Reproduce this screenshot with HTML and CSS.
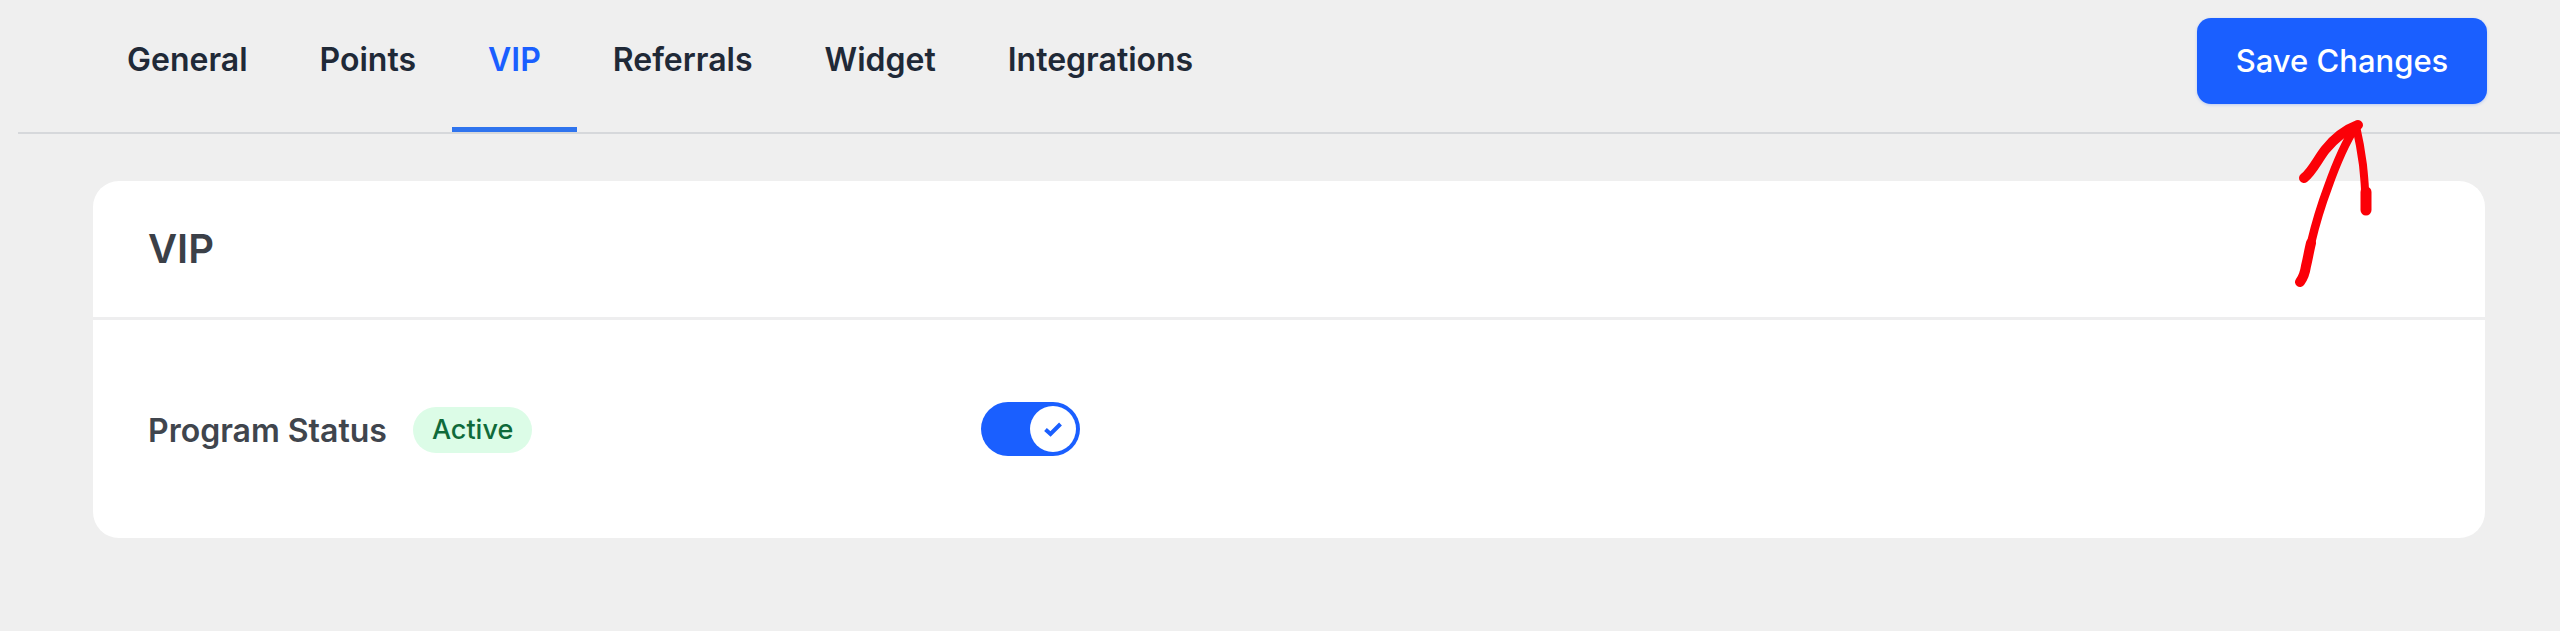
FILE: index.html
```html
<!DOCTYPE html>
<html lang="en">
<head>
    <meta charset="UTF-8">
    <meta name="viewport" content="width=device-width, initial-scale=1.0">
    <title>VIP Settings</title>
    <link rel="stylesheet" href="styles.css">
</head>
<body>
    <!-- Top tabs -->
    <div class="topbar">
        <nav class="tabs">
            <a class="tab" href="#">General</a>
            <a class="tab" href="#">Points</a>
            <a class="tab active" href="#">VIP</a>
            <a class="tab" href="#">Referrals</a>
            <a class="tab" href="#">Widget</a>
            <a class="tab" href="#">Integrations</a>
        </nav>
        <button class="save-button">Save Changes</button>
    </div>

    <!-- VIP card -->
    <div class="card">
        <h2 class="card-title">VIP</h2>
        <div class="card-body">
            <div class="status">
                <span class="status-label">Program Status</span>
                <span class="badge">Active</span>
            </div>
            <div class="toggle">
                <span class="knob">
                    <svg width="20" height="16" viewBox="0 0 20 16">
                        <path d="M2.5 8.5 L7.5 13 L17.5 3" fill="none" stroke="#1a5fff" stroke-width="4"/>
                    </svg>
                </span>
            </div>
        </div>
    </div>

    <!-- Hand drawn arrow over the page -->
    <svg class="arrow" width="100" height="200" viewBox="2280 110 100 200">
        <g fill="none" stroke="#fb0007" stroke-linecap="round" stroke-linejoin="round">
            <path stroke-width="10" d="M2300 282 C2303 278 2305 273 2306 266 C2308 258 2309 251 2311 243"/>
            <path stroke-width="8.5" d="M2311 243 C2316 222 2322 203 2328 187 C2334 170 2343 146 2356 126"/>
            <path stroke-width="10" d="M2304 178 C2312 172 2318 159 2325 150 C2333 140 2342 131 2358 125"/>
            <path stroke-width="8" d="M2356 126 C2359 139 2361 150 2363 165 C2364 176 2365 184 2365 192"/>
            <path stroke-width="11" d="M2366 192 L2366 210"/>
        </g>
    </svg>
</body>
</html>
```

FILE: styles.css
```css
body {
    margin: 0;
    min-height: 631px;
    background: #efefef;
    font-family: Inter, "Liberation Sans", sans-serif;
    position: relative;
    overflow: hidden;
}
.topbar {
    display: flex;
    justify-content: space-between;
    align-items: flex-start;
    height: 132px;
    margin-left: 18px;
    border-bottom: 2px solid #d6d8db;
}
.tabs {
    display: flex;
    padding-left: 73px;
}
.tab {
    height: 127px;
    padding: 0 36px;
    line-height: 119px;
    font-size: 32px;
    font-weight: 600;
    color: #1f2937;
    text-decoration: none;
    border-bottom: 5px solid transparent;
}
.tab.active {
    color: #1a5fff;
    border-bottom-color: #2f74ee;
}
.save-button {
    width: 290px;
    height: 86px;
    margin: 18px 73px 0 0;
    padding: 0 0 2px;
    background: #1a5fff;
    color: #fff;
    border: none;
    border-radius: 14px;
    font-family: inherit;
    font-size: 31px;
    font-weight: 500;
    box-shadow: 0 1px 3px rgba(26, 95, 255, 0.25);
}
.card {
    margin: 47px 75px 0 93px;
    background: #fff;
    border-radius: 26px;
}
.card-title {
    margin: 0;
    padding: 0 55px;
    height: 136px;
    line-height: 136px;
    font-size: 40px;
    font-weight: 600;
    color: #3b4048;
    border-bottom: 3px solid #eeeeef;
}
.card-body {
    display: flex;
    align-items: center;
    height: 218px;
    padding: 0 55px;
}
.status {
    display: flex;
    align-items: center;
    gap: 26px;
    width: 833px;
    padding-top: 2px;
}
.status-label {
    font-size: 32px;
    font-weight: 600;
    color: #40454d;
}
.badge {
    padding: 0 19px;
    height: 46px;
    line-height: 46px;
    border-radius: 23px;
    background: #dcfce7;
    color: #0f6a3a;
    font-size: 27px;
    font-weight: 500;
}
.toggle {
    display: flex;
    justify-content: flex-end;
    align-items: center;
    width: 99px;
    height: 54px;
    padding-right: 4px;
    box-sizing: border-box;
    border-radius: 27px;
    background: #1a5fff;
}
.knob {
    display: flex;
    justify-content: center;
    align-items: center;
    width: 46px;
    height: 46px;
    border-radius: 50%;
    background: #fff;
}
.arrow {
    position: absolute;
    left: 2280px;
    top: 110px;
}
```
